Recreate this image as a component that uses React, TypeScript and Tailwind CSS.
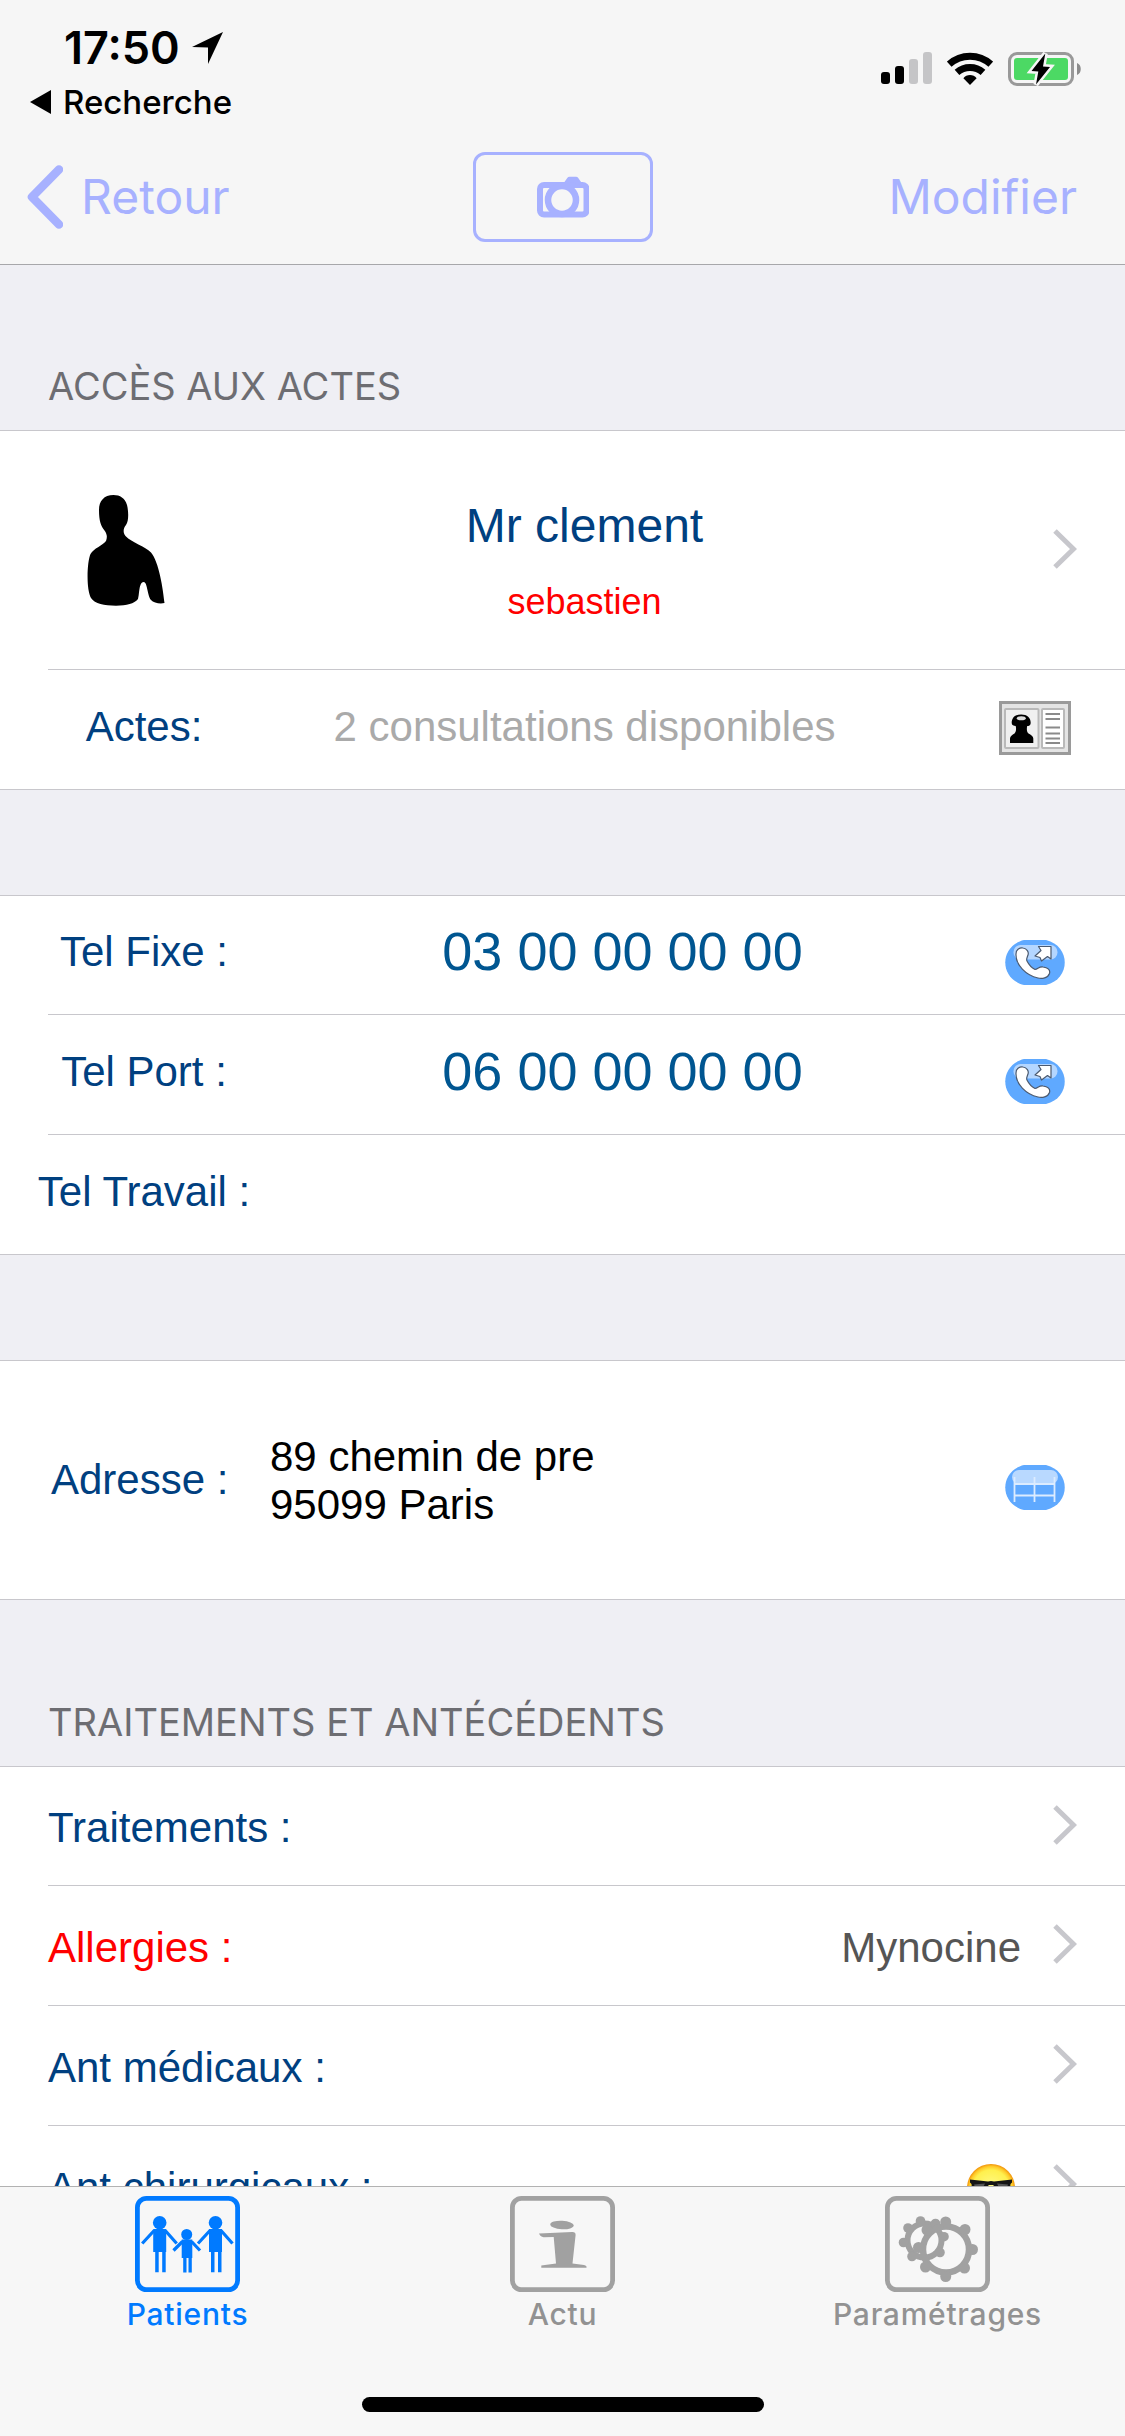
import type { ReactNode } from 'react';
import clsx from 'clsx';

const phones = [
  { label: 'Tel Fixe :', number: '03 00 00 00 00' },
  { label: 'Tel Port :', number: '06 00 00 00 00' },
  { label: 'Tel Travail :', number: '' },
];

const history = [
  { label: 'Traitements :', value: null, alert: false },
  { label: 'Allergies :', value: 'Mynocine', alert: true },
  { label: 'Ant médicaux :', value: null, alert: false },
  { label: 'Ant chirurgicaux :', value: <CoolFace />, alert: false },
];

const tabs = [
  { label: 'Patients', icon: <FamilyGlyph />, active: true },
  { label: 'Actu', icon: <InfoGlyph />, active: false },
  { label: 'Paramétrages', icon: <GearsGlyph />, active: false },
];

function LocationArrow() {
  return (
    <svg width="31" height="32" viewBox="0 0 31 32" aria-hidden="true">
      <path d="M31 0 16 32V15.5L0 15Z" />
    </svg>
  );
}

function SignalBars() {
  return (
    <svg width="51" height="32" viewBox="0 0 51 32" aria-hidden="true">
      <rect x="0" y="20" width="9" height="12" rx="3" />
      <rect x="14" y="14" width="9" height="18" rx="3" />
      <rect x="28" y="7" width="9" height="25" rx="3" fill="#c5c5c7" />
      <rect x="42" y="0" width="9" height="32" rx="3" fill="#c5c5c7" />
    </svg>
  );
}

function Wifi() {
  return (
    <svg width="46" height="33" viewBox="0 0 46 33" aria-hidden="true">
      <path d="M2.2 12.2A31 31 0 0 1 43.8 12.2" fill="none" stroke="#000" strokeWidth="7" />
      <path d="M10 20.4A19.5 19.5 0 0 1 36 20.4" fill="none" stroke="#000" strokeWidth="7" />
      <path d="M23 33l-6.6-6.8C19.5 22 26.5 22 29.6 26.2Z" />
    </svg>
  );
}

function Battery() {
  return (
    <svg width="73" height="34" viewBox="0 0 73 34" aria-hidden="true">
      <rect x="1.5" y="1.5" width="63" height="31" rx="7.5" fill="none" stroke="#999" strokeWidth="3" />
      <path d="M69 11c5 1.5 5 10.5 0 12Z" fill="#8c8c8c" />
      <rect x="6" y="6" width="54" height="22" rx="3" fill="#4cd964" />
      <path
        d="M37.3 1.5 35 14.5 42 15 28 32.5 30.3 19.5 23.5 19Z"
        stroke="#f6f6f6"
        strokeWidth="5"
        paintOrder="stroke"
      />
    </svg>
  );
}

function BackChevron() {
  return (
    <svg width="36" height="64" viewBox="0 0 36 64" fill="none" aria-hidden="true">
      <path d="M32 4.5 5 32l27 27.5" stroke="currentColor" strokeWidth="8.5" strokeLinecap="round" strokeLinejoin="round" />
    </svg>
  );
}

function CameraGlyph() {
  return (
    <svg width="52" height="42" viewBox="0 0 52 42" fill="none" stroke="currentColor" aria-hidden="true">
      <rect x="3" y="9" width="46.5" height="29.5" rx="4" strokeWidth="6" />
      <path d="M29 8.5 32.5 3.500h6.500L42.500 8.5" strokeWidth="5.5" strokeLinejoin="round" />
      <circle cx="25" cy="24" r="14" fill="#f6f6f6" strokeWidth="6.5" />
    </svg>
  );
}

function Chevron() {
  return (
    <svg width="24" height="43" viewBox="0 0 24 43" fill="none" className="shrink-0" aria-hidden="true">
      <path d="M2 2 20.5 20 2 38" stroke="#c7c7cc" strokeWidth="5" />
    </svg>
  );
}

function Silhouette() {
  return (
    <svg width="78" height="111" viewBox="0 0 78 111" aria-hidden="true">
      <path d="M26.5 0C17 0 12 6 12 15c0 11 2 16 5.500 20.5C20 39 20.5 42 19 46 15 51 7 53 3.500 59 0 67-1 94 4 103c4 6 13 7.700 25 7.700 11 0 18-2 22-6.700 1.500-4 .8-17 5.600-17 4 0 3.500 13 7.400 18 2.500 3 9 4 13.500 3C76 94 72 67 64 57.500 58 51 45 48 38.500 41c-3-4-2-8 .5-11 3-4 2.500-14 1-20C38 3 33 0 26.500 0Z" />
    </svg>
  );
}

function CardIcon() {
  return (
    <svg width="72" height="54" viewBox="0 0 72 54" aria-hidden="true">
      <rect x="1.5" y="1.5" width="69" height="51" fill="#e4e4e4" stroke="#9a9a9a" strokeWidth="3" />
      <rect x="6" y="8" width="33.5" height="39" rx="1" fill="#f0f0f0" stroke="#b9b9b9" strokeWidth="2" />
      <rect x="43" y="8" width="22" height="39" rx="1" fill="#fff" stroke="#b9b9b9" strokeWidth="2" />
      <path d="M12.7 22c0-5.500 3.600-8.500 9.500-8.500s9.500 3 9.500 8.500c0 2.500-2 3-3.500 3-.8 3.500-.2 6 1.300 7.500 2.500 1.500 4.800 2.500 4.800 5V42H11v-4.500c0-2.500 2.300-3.500 4.500-5 1.500-1.500 2-4 1.200-7.500-2-.2-4-.7-4-3Z" />
      <ellipse cx="22.3" cy="17.3" rx="4.5" ry="2" fill="#ddd" />
      <path
        d="M46.500 13H61M46.500 18H61M46.500 26.500H61M46.500 32.500H61M46.500 37.500H61M46.500 42H61"
        stroke="#8a8a8a"
        strokeWidth="1.8"
      />
    </svg>
  );
}

function CallIcon() {
  return (
    <svg width="60" height="45" viewBox="0 0 60 45" aria-hidden="true">
      <path d="M19 0H41C66 6 66 39 41 45H19C-6 39-6 6 19 0Z" fill="#5fa9ff" />
      <rect x="8.5" y="5" width="44" height="14.5" rx="7" fill="#b4d6ff" />
      <g fill="#fff" stroke="#4b5a70" strokeWidth="1.2" strokeLinejoin="round">
        <path d="M11 14c0-5 4-6.500 7-6 4 .5 6 4 5 7-1 3-2 4-1 6 2 4 5 7 8 8.500 3-.5 4-3 8-2.500 5 .5 7.500 3 6.500 6.500-1.500 4.500-7.500 5.500-11.500 4.500C21 35.500 10.500 25 11 14Z" />
        <path d="M33.500 6.500H46V19l-3.500-2.500L36.500 21 35 17.500 30 16l6-5.500Z" />
      </g>
    </svg>
  );
}

function MapIcon() {
  return (
    <svg width="60" height="45" viewBox="0 0 60 45" aria-hidden="true">
      <path d="M19 0H41C66 6 66 39 41 45H19C-6 39-6 6 19 0Z" fill="#5fa9ff" />
      <rect x="7" y="5" width="46" height="14" rx="7" fill="#b9d9ff" />
      <path d="M9.500 12V37M29.500 12V37M49.500 12V37M9.500 19H49.500M9.500 30.500H49.500" stroke="#dcecff" strokeWidth="1.8" />
    </svg>
  );
}

function CoolFace() {
  return (
    <svg width="48" height="48" viewBox="0 0 48 48" className="mr-[6px]" role="img" aria-label="Lunettes de soleil">
      <defs>
        <radialGradient id="face" cx="0.5" cy="0.5" r="0.5">
          <stop offset="0" stopColor="#fffb8a" />
          <stop offset="0.75" stopColor="#fff04e" />
          <stop offset="0.9" stopColor="#ffc928" />
          <stop offset="1" stopColor="#f0920a" />
        </radialGradient>
      </defs>
      <circle cx="24" cy="24" r="24" fill="url(#face)" />
      <path d="M3 15.500 21 17.500q3-1 6 0l18-2v3l-1.500 1.500C43 27 41 30 35 30c-6 0-8-4-8.500-9h-5C21 26 19 30 13 30c-6 0-8-3-8.500-10L3 18.500Z" fill="#151515" />
      <path d="M7 20.500l11-1-2 4H8Z M30 19.500l11 1-1 3h-8Z" fill="#555" />
      <path d="M14 36q10 6 20 0" fill="none" stroke="#6b3a00" strokeWidth="2.5" />
    </svg>
  );
}

function Adult({ x }: { x: number }) {
  return (
    <g transform={`translate(${x} 0)`}>
      <circle cx="0" cy="26.7" r="6.8" />
      <path d="M-6.500 33H6.500V56H-6.500Z M-4.500 56H-1V76.300H-4.500Z M2.500 56H6V76.300H2.500Z" />
      <path d="M-5.500 34.500-17.500 47.500M5.500 34.500 17 47.500" fill="none" stroke="currentColor" strokeWidth="3.2" />
    </g>
  );
}

function FamilyGlyph() {
  return (
    <g>
      <Adult x={24.7} />
      <Adult x={80.5} />
      <circle cx="51.7" cy="38.5" r="5.5" />
      <path d="M46.700 43.500H57.300V62H46.700Z M48.200 62H51.500V76.500H48.200Z M53.500 62H56.800V76.500H53.500Z" />
      <path d="M47.500 45.500 38.500 54.500M56.500 45.500 65 54.500" fill="none" stroke="currentColor" strokeWidth="3.2" />
    </g>
  );
}

function InfoGlyph() {
  return (
    <g>
      <ellipse cx="52" cy="29" rx="11.8" ry="4.3" transform="rotate(3 52 29)" />
      <path d="M29 37.500 62 36q3.800-.2 3.600 3L62.500 67.500 74 69q3 .8 2.500 2.700H31.300V69.500L46 67.500 43.700 41l-10 .2Q30 40.500 29 37.500Z" />
    </g>
  );
}

const bigTeeth = [
  [60.7, 26], [80, 33.5], [87.5, 53.5], [79.5, 72], [60.7, 80.5], [40.5, 71], [33.5, 51.5], [42, 34],
];
const smallTeeth = [
  [35.5, 25], [23, 32], [18.5, 46.5], [27, 60.5], [55, 56.5], [59, 40.7], [50.5, 27.5],
];

function GearsGlyph() {
  return (
    <g>
      <circle cx="39.5" cy="44.5" r="17" fill="none" stroke="currentColor" strokeWidth="6" />
      {smallTeeth.map(([x, y]) => (
        <circle key={`${x}-${y}`} cx={x} cy={y} r="4.8" />
      ))}
      <circle cx="61" cy="53.5" r="23" fill="none" stroke="currentColor" strokeWidth="6.5" />
      {bigTeeth.map(([x, y]) => (
        <circle key={`${x}-${y}`} cx={x} cy={y} r="5.5" />
      ))}
    </g>
  );
}

function Title({ children }: { children: ReactNode }) {
  return <h2 className="pl-12 pb-[21px] font-['Inter',sans-serif] text-[38px] leading-[46px] text-[#6d6d72]">{children}</h2>;
}

function List({ children }: { children: ReactNode }) {
  return <ul className="bg-white text-[42px] leading-[48px] text-[#004080]">{children}</ul>;
}

function Row({ tall = false, children }: { tall?: boolean; children: ReactNode }) {
  return (
    <li className={clsx('group flex flex-col border-[#c8c7cc] first:border-t', tall ? 'h-60' : 'h-30')}>
      <div className="flex flex-1 items-center">{children}</div>
      <div className="ml-12 h-px bg-[#c8c7cc] group-last:ml-0" />
    </li>
  );
}

export default function App() {
  return (
    <div className="flex h-screen flex-col overflow-hidden bg-[#efeff4] font-['Liberation_Sans',Arial,sans-serif]">
      <header className="border-b border-[#a7a7aa] bg-[#f6f6f6] font-['Inter',sans-serif]">
        <div className="flex h-[126px] justify-between pr-11 pl-[30px]">
          <div className="pt-5">
            <div className="flex items-center gap-3 pl-[34px] text-[45px] leading-[56px] font-semibold">
              <span>17:50</span>
              <LocationArrow />
            </div>
            <a href="#recherche" className="mt-[6px] flex items-center gap-3 text-[33px] leading-10 font-medium">
              <svg width="21" height="24" viewBox="0 0 21 24" aria-hidden="true">
                <path d="M0 12 21 0v24Z" />
              </svg>
              Recherche
            </a>
          </div>
          <div className="flex items-start gap-[15px] pt-[52px]">
            <SignalBars />
            <Wifi />
            <Battery />
          </div>
        </div>
        <div className="grid h-[138px] grid-cols-3 items-center px-12 pt-1 text-[48px] text-[#a7b1ff]">
          <button type="button" className="-ml-[21px] flex items-center gap-[18px] justify-self-start">
            <BackChevron />
            Retour
          </button>
          <button
            type="button"
            aria-label="Photo"
            className="flex h-[90px] w-[180px] items-center justify-center justify-self-center rounded-xl border-3 border-[#a7b1ff]"
          >
            <CameraGlyph />
          </button>
          <button type="button" className="justify-self-end">
            Modifier
          </button>
        </div>
      </header>

      <main className="flex flex-1 flex-col overflow-y-auto pt-[98px] [scrollbar-width:none]">
        <section>
          <Title>ACCÈS AUX ACTES</Title>
          <List>
            <Row tall>
              <div className="w-72 pl-[87px]">
                <Silhouette />
              </div>
              <div className="flex-1 pt-7 text-center">
                <p className="text-[48px] leading-[64px]">Mr clement</p>
                <p className="pt-3 text-[36px] leading-[64px] text-[#ff0000]">sebastien</p>
              </div>
              <a href="#fiche" aria-label="Ouvrir la fiche" className="flex w-61 justify-end pr-12">
                <Chevron />
              </a>
            </Row>
            <Row>
              <p className="w-72 pb-[6px] text-center">Actes:</p>
              <p className="flex-1 pb-[6px] text-center text-[#aaaaaa]">2 consultations disponibles</p>
              <button type="button" aria-label="Voir les actes" className="flex w-61 justify-end pr-[54px] pb-1">
                <CardIcon />
              </button>
            </Row>
          </List>
        </section>

        <section className="mt-[105px]">
          <List>
            {phones.map(({ label, number }) => (
              <Row key={label}>
                <p className="w-72 pb-[6px] text-center">{label}</p>
                <p className="flex-1 pb-2 text-center text-[54px] text-[#005691]">{number}</p>
                <div className="flex w-42 justify-end pt-[14px] pr-15">
                  {number && (
                    <a href={`tel:${number.replaceAll(' ', '')}`} aria-label="Appeler">
                      <CallIcon />
                    </a>
                  )}
                </div>
              </Row>
            ))}
          </List>
        </section>

        <section className="mt-[105px]">
          <List>
            <Row tall>
              <p className="w-[270px] pl-[51px]">Adresse :</p>
              <address className="flex-1 pt-[2px] text-black not-italic">
                89 chemin de pre
                <br />
                95099 Paris
              </address>
              <a href="#plan" aria-label="Voir le plan" className="pt-[14px] pr-15">
                <MapIcon />
              </a>
            </Row>
          </List>
        </section>

        <section className="mt-[99px]">
          <Title>TRAITEMENTS ET ANTÉCÉDENTS</Title>
          <List>
            {history.map(({ label, value, alert }) => (
              <Row key={label}>
                <a href="#detail" className="flex flex-1 items-center gap-8 pr-12 pl-12">
                  <span className={clsx('flex-1 pt-1', alert && 'text-[#ff0000]')}>{label}</span>
                  <span className="pt-1 text-[#555555]">{value}</span>
                  <Chevron />
                </a>
              </Row>
            ))}
          </List>
        </section>
      </main>

      <nav className="flex h-[250px] shrink-0 flex-col justify-between border-t border-[#b2b2b2] bg-[#f7f7f7] pt-[9px] pb-6">
        <div className="grid grid-cols-3">
          {tabs.map(({ label, icon, active }) => (
            <button
              key={label}
              type="button"
              className={clsx(
                "flex flex-col items-center font-['Inter',sans-serif] text-[30px] leading-[44px] font-medium tracking-wide",
                active ? 'text-[#007aff]' : 'text-[#929292]',
              )}
            >
              <svg
                width="105"
                height="96"
                viewBox="0 0 105 96"
                fill="currentColor"
                className={active ? 'text-[#007aff]' : 'text-[#a1a1a1]'}
                aria-hidden="true"
              >
                <rect x="2.4" y="2.4" width="100.2" height="91.2" rx="9" fill="none" stroke="currentColor" strokeWidth="4.8" />
                {icon}
              </svg>
              {label}
            </button>
          ))}
        </div>
        <div className="h-[15px] w-[402px] self-center rounded-full bg-black" />
      </nav>
    </div>
  );
}
